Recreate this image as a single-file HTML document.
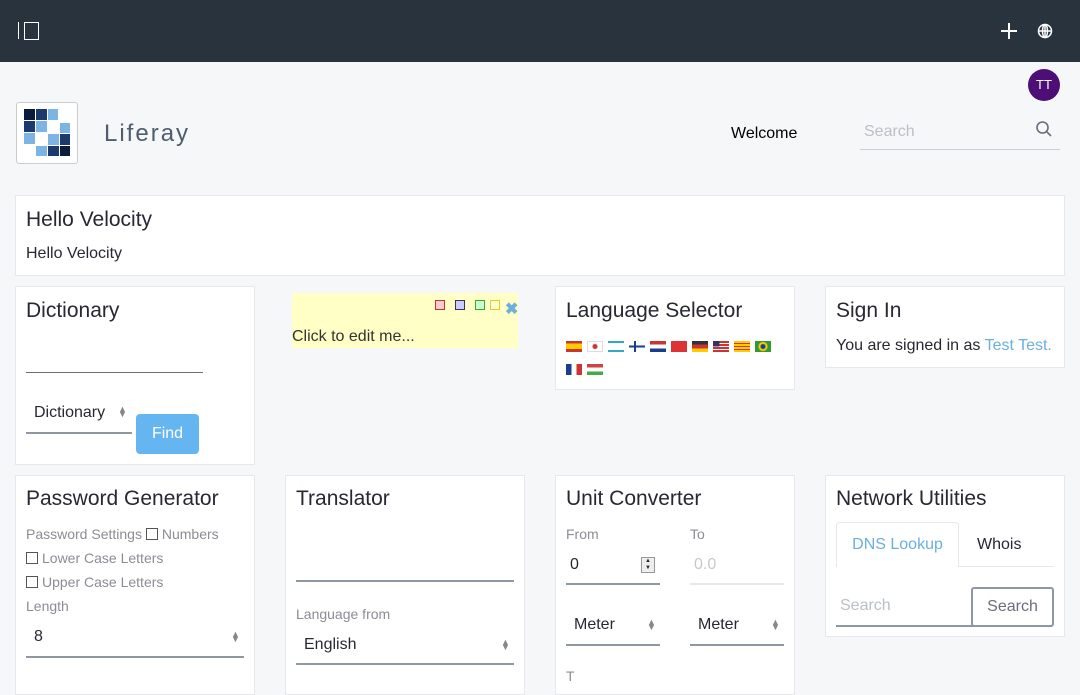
<!DOCTYPE html>
<html><head><style>
*{box-sizing:border-box;margin:0;padding:0}
body{width:1080px;height:675px;overflow:hidden;background:#f5f7f9;font-family:"Liberation Sans",sans-serif;color:#272833;position:relative}
.a{position:absolute}
.card{position:absolute;background:#fff;border:1px solid #e7e7ed}
.h{position:absolute;font-size:21px;color:#272833}
.lbl{position:absolute;font-size:14px;color:#8b8c96}
.ul{position:absolute;height:2px;background:#8e98a3}
.chk{display:inline-block;width:12px;height:12px;border:1px solid #555;vertical-align:-1px;margin-right:4px;background:#fff}
.arr{position:absolute;font-size:9px;color:#888;line-height:5px}
.fl{display:inline-block;width:16px;height:11px;margin-right:5px}
</style></head><body>
<div class="a" style="left:0;top:0;width:1080px;height:62px;background:#29333d"></div>
<div class="a" style="left:18px;top:22px;width:1px;height:17px;background:#fff"></div>
<div class="a" style="left:24px;top:22px;width:15px;height:18px;border:1.5px solid #fff"></div>
<div class="a" style="left:1001px;top:30px;width:16px;height:2px;background:#fff"></div>
<div class="a" style="left:1008px;top:23px;width:2px;height:16px;background:#fff"></div>
<svg class="a" style="left:1037px;top:23px" width="16" height="16" viewBox="0 0 16 16" fill="none" stroke="#fff" stroke-width="1.5"><circle cx="8" cy="8" r="6.5"/><ellipse cx="8" cy="8" rx="2.5" ry="6.5"/><line x1="1.5" y1="8" x2="14.5" y2="8"/><line x1="8" y1="1" x2="8" y2="15"/></svg>
<div class="a" style="left:1028px;top:69px;width:32px;height:32px;border-radius:50%;background:#4d0f75;color:#fff;font-size:13px;text-align:center;line-height:32px">TT</div>
<div class="a" style="left:16px;top:102px;width:62px;height:62px;border:1px solid #ccc;border-radius:3px;background:#fff"></div>
<svg class="a" style="left:23px;top:109px" width="48" height="48" viewBox="0 0 48 48">
<rect x="1" y="0" width="11" height="11" fill="#0b1b3a"/><rect x="13" y="0" width="11" height="11" fill="#1d3a6e"/><rect x="25" y="0" width="10" height="11" fill="#7cb4e3"/>
<rect x="1" y="12" width="11" height="11" fill="#1d3a6e"/><rect x="13" y="12" width="11" height="11" fill="#7cb4e3"/><rect x="37" y="14" width="10" height="10" fill="#7cb4e3"/>
<rect x="1" y="24" width="11" height="11" fill="#7cb4e3"/><rect x="25" y="25" width="11" height="11" fill="#7cb4e3"/><rect x="37" y="25" width="10" height="11" fill="#1d3a6e"/>
<rect x="13" y="37" width="11" height="10" fill="#7cb4e3"/><rect x="25" y="37" width="11" height="10" fill="#1d3a6e"/><rect x="37" y="37" width="10" height="10" fill="#0b1b3a"/></svg>
<div class="a" style="left:104px;top:120px;font-size:24px;letter-spacing:2px;color:#4f5d6d">Liferay</div>
<div class="a" style="left:731px;top:125px;font-size:16px;color:#000">Welcome</div>
<div class="a" style="left:864px;top:123px;font-size:16px;color:#bbc0c6">Search</div>
<svg class="a" style="left:1035px;top:120px" width="18" height="18" viewBox="0 0 18 18" fill="none" stroke="#6b6c7e" stroke-width="1.6"><circle cx="7.5" cy="7.5" r="5.5"/><line x1="11.5" y1="11.5" x2="16" y2="16"/></svg>
<div class="a" style="left:860px;top:149px;width:200px;height:1px;background:#cdced9"></div>

<div class="card" style="left:15px;top:195px;width:1050px;height:81px"></div>
<div class="h" style="left:26px;top:208px">Hello Velocity</div>
<div class="a" style="left:26px;top:245px;font-size:16px">Hello Velocity</div>

<div class="card" style="left:15px;top:286px;width:240px;height:179px"></div>
<div class="h" style="left:26px;top:299px">Dictionary</div>
<div class="ul" style="left:26px;top:372px;width:177px;height:1px;background:#6b6c7e"></div>
<div class="a" style="left:34px;top:404px;font-size:16px">Dictionary</div>
<div class="arr" style="left:118px;top:407px">▲<br>▼</div>
<div class="ul" style="left:26px;top:432px;width:106px"></div>
<div class="a" style="left:136px;top:414px;width:63px;height:40px;background:#65b6f0;border-radius:4px;color:#fff;font-size:16px;text-align:center;line-height:40px">Find</div>

<div class="a" style="left:292px;top:293px;width:226px;height:55px;background:#ffffc6"></div>
<div class="a" style="left:435px;top:300px;width:10px;height:10px;border:1px solid #b33;background:#fcc"></div>
<div class="a" style="left:455px;top:300px;width:10px;height:10px;border:1px solid #336;background:#ccf"></div>
<div class="a" style="left:475px;top:300px;width:10px;height:10px;border:1px solid #3a3;background:#cfc"></div>
<div class="a" style="left:490px;top:300px;width:10px;height:10px;border:1px solid #dc3;background:#ffc"></div>
<div class="a" style="left:505px;top:299px;font-size:16px;font-weight:bold;color:#6ab0de">✖</div>
<div class="a" style="left:292px;top:328px;font-size:16px;color:#333">Click to edit me...</div>

<div class="card" style="left:555px;top:286px;width:240px;height:104px"></div>
<div class="h" style="left:566px;top:299px">Language Selector</div>
<div class="a" style="left:566px;top:336px;width:220px;line-height:23px">
<span class="fl" style="background:linear-gradient(#c33 25%,#fc0 25%,#fc0 75%,#c33 75%)"></span><span class="fl" style="background:radial-gradient(circle,#c33 2px,#fff 3px);border:1px solid #ddd"></span><span class="fl" style="background:linear-gradient(#3ab 20%,#fff 20%,#fff 80%,#3ab 80%)"></span><span class="fl" style="background:linear-gradient(90deg,transparent 30%,#1a3d8f 30%,#1a3d8f 45%,transparent 45%),linear-gradient(#fff 40%,#1a3d8f 40%,#1a3d8f 60%,#fff 60%)"></span><span class="fl" style="background:linear-gradient(#c33 33%,#fff 33%,#fff 66%,#1a3d8f 66%)"></span><span class="fl" style="background:#d33"></span><span class="fl" style="background:linear-gradient(#333 33%,#c33 33%,#c33 66%,#fc0 66%)"></span><span class="fl" style="background:linear-gradient(90deg,#336 40%,transparent 40%) top/100% 50% no-repeat,repeating-linear-gradient(#c33 0 2px,#fff 2px 3px)"></span><span class="fl" style="background:repeating-linear-gradient(#fc0 0 2px,#c33 2px 3px)"></span><span class="fl" style="background:radial-gradient(circle,#1a3d8f 2px,#fc0 3px,#fc0 4px,#393 5px)"></span><br>
<span class="fl" style="background:linear-gradient(90deg,#1a3d8f 33%,#fff 33%,#fff 66%,#c33 66%)"></span><span class="fl" style="background:linear-gradient(#c44 33%,#fff 33%,#fff 66%,#4a4 66%)"></span></div>

<div class="card" style="left:825px;top:286px;width:240px;height:82px"></div>
<div class="h" style="left:836px;top:299px">Sign In</div>
<div class="a" style="left:836px;top:337px;font-size:16px">You are signed in as <span style="color:#6ab0de">Test Test.</span></div>

<div class="card" style="left:15px;top:475px;width:240px;height:220px"></div>
<div class="h" style="left:26px;top:487px">Password Generator</div>
<div class="lbl" style="left:26px;top:526px">Password Settings <span class="chk"></span>Numbers</div>
<div class="lbl" style="left:26px;top:550px"><span class="chk"></span>Lower Case Letters</div>
<div class="lbl" style="left:26px;top:574px"><span class="chk"></span>Upper Case Letters</div>
<div class="lbl" style="left:26px;top:598px">Length</div>
<div class="a" style="left:34px;top:628px;font-size:16px">8</div>
<div class="arr" style="left:231px;top:632px">▲<br>▼</div>
<div class="ul" style="left:26px;top:656px;width:218px"></div>

<div class="card" style="left:285px;top:475px;width:240px;height:220px"></div>
<div class="h" style="left:296px;top:487px">Translator</div>
<div class="ul" style="left:296px;top:580px;width:218px"></div>
<div class="lbl" style="left:296px;top:606px">Language from</div>
<div class="a" style="left:304px;top:636px;font-size:16px">English</div>
<div class="arr" style="left:501px;top:640px">▲<br>▼</div>
<div class="ul" style="left:296px;top:663px;width:218px"></div>

<div class="card" style="left:555px;top:475px;width:240px;height:220px"></div>
<div class="h" style="left:566px;top:487px">Unit Converter</div>
<div class="lbl" style="left:566px;top:526px">From</div>
<div class="lbl" style="left:690px;top:526px">To</div>
<div class="a" style="left:570px;top:556px;font-size:16px">0</div>
<div class="a" style="left:641px;top:557px;width:14px;height:16px;border:1px solid #999;background:#eee;font-size:6px;line-height:7px;text-align:center">▲<br>▼</div>
<div class="ul" style="left:566px;top:583px;width:94px"></div>
<div class="a" style="left:694px;top:556px;font-size:16px;color:#c5c8cc">0.0</div>
<div class="ul" style="left:690px;top:583px;width:94px;background:#e7e7ed"></div>
<div class="a" style="left:574px;top:616px;font-size:16px">Meter</div>
<div class="arr" style="left:647px;top:620px">▲<br>▼</div>
<div class="ul" style="left:566px;top:644px;width:94px"></div>
<div class="a" style="left:698px;top:616px;font-size:16px">Meter</div>
<div class="arr" style="left:771px;top:620px">▲<br>▼</div>
<div class="ul" style="left:690px;top:644px;width:94px"></div>

<div class="card" style="left:825px;top:475px;width:240px;height:162px"></div>
<div class="h" style="left:836px;top:487px">Network Utilities</div>
<div class="a" style="left:836px;top:566px;width:218px;height:1px;background:#e7e7ed"></div>
<div class="a" style="left:836px;top:522px;width:123px;height:45px;border:1px solid #e7e7ed;border-bottom:none;background:#fff;border-radius:4px 4px 0 0;color:#6ab0de;font-size:16px;text-align:center;line-height:44px">DNS Lookup</div>
<div class="a" style="left:977px;top:536px;font-size:16px">Whois</div>
<div class="a" style="left:840px;top:597px;font-size:16px;color:#bbc0c6">Search</div>
<div class="ul" style="left:836px;top:625px;width:140px"></div>
<div class="a" style="left:971px;top:587px;width:83px;height:40px;border:2px solid #8e98a3;border-radius:3px;color:#6b6c7e;font-size:16px;text-align:center;line-height:36px">Search</div>
<div class="a" style="left:566px;top:668px;font-size:14px;color:#8b8c96">T</div>
</body></html>
